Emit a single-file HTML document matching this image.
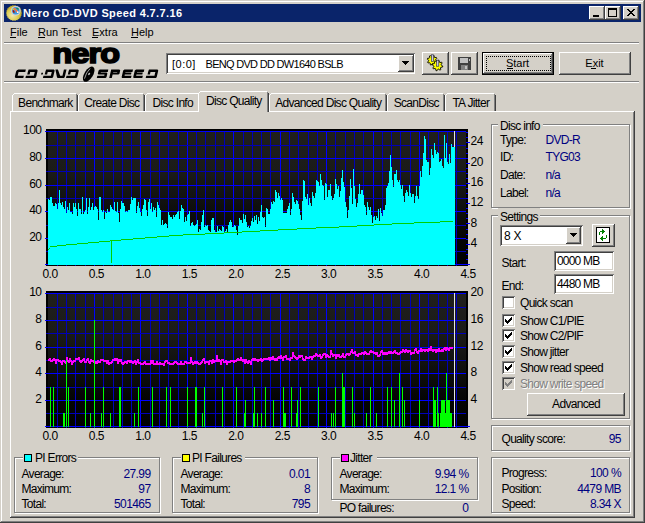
<!DOCTYPE html><html><head><meta charset="utf-8"><style>
html,body{margin:0;padding:0;width:645px;height:523px;overflow:hidden;background:#d4d0c8}
body{position:relative;font-family:"Liberation Sans",sans-serif}
div{position:absolute;box-sizing:border-box}
.t{white-space:pre;line-height:13px;font-size:11px}
</style></head><body>
<div style="left:0px;top:0px;width:645px;height:1px;background:#d4d0c8"></div>
<div style="left:0px;top:0px;width:1px;height:523px;background:#d4d0c8"></div>
<div style="left:1px;top:1px;width:643px;height:1px;background:#fff"></div>
<div style="left:1px;top:1px;width:1px;height:521px;background:#fff"></div>
<div style="left:644px;top:0px;width:1px;height:523px;background:#404040"></div>
<div style="left:0px;top:522px;width:645px;height:1px;background:#404040"></div>
<div style="left:643px;top:1px;width:1px;height:521px;background:#808080"></div>
<div style="left:1px;top:521px;width:643px;height:1px;background:#808080"></div>
<div style="left:4px;top:4px;width:637px;height:18px;background:#0a246a"></div>
<svg style="position:absolute;left:4px;top:4px" width="20" height="18" viewBox="4 4 20 18">
<defs><radialGradient id="gold" cx="0.4" cy="0.65" r="0.6"><stop offset="0" stop-color="#f0e8b0"/><stop offset="0.6" stop-color="#dccc50"/><stop offset="1" stop-color="#c0a820"/></radialGradient></defs>
<polygon points="22.10,13.00 21.23,14.04 21.77,15.28 20.64,16.03 20.81,17.38 19.52,17.78 19.30,19.12 17.95,19.14 17.36,20.37 16.06,20.00 15.15,21.02 14.00,20.30 12.85,21.02 11.94,20.00 10.64,20.37 10.05,19.14 8.70,19.12 8.48,17.78 7.19,17.38 7.36,16.03 6.23,15.28 6.77,14.04 5.90,13.00 6.77,11.96 6.23,10.72 7.36,9.97 7.19,8.62 8.48,8.22 8.70,6.88 10.05,6.86 10.64,5.63 11.94,6.00 12.85,4.98 14.00,5.70 15.15,4.98 16.06,6.00 17.36,5.63 17.95,6.86 19.30,6.88 19.52,8.22 20.81,8.62 20.64,9.97 21.77,10.72 21.23,11.96" fill="url(#gold)"/>
<circle cx="15.8" cy="10.8" r="4.9" fill="#d0d0d8"/>
<circle cx="15.8" cy="10.8" r="3.7" fill="#3898e0"/>
<path d="M14 8 L17.8 12.3" stroke="#ff7040" stroke-width="1.6"/>
<path d="M13 10.3 L14.3 12.6" stroke="#b01000" stroke-width="1.5"/>
<path d="M16.5 8.3 L18.6 9.2" stroke="#209020" stroke-width="1.2"/>
<circle cx="13.3" cy="9.3" r="0.7" fill="#f0e000"/>
<circle cx="17.8" cy="12.2" r="0.9" fill="#fff"/>
</svg>
<div class="t" style="left:23px;top:7px;color:#fff;font-size:11px;font-weight:700;letter-spacing:0.37px;">Nero CD-DVD Speed 4.7.7.16</div>
<div style="left:589px;top:6px;width:16px;height:14px;background:#d4d0c8;box-shadow:inset -1px -1px #404040,inset 1px 1px #fff,inset -2px -2px #808080,inset 2px 2px #d4d0c8"></div>
<div style="left:605px;top:6px;width:16px;height:14px;background:#d4d0c8;box-shadow:inset -1px -1px #404040,inset 1px 1px #fff,inset -2px -2px #808080,inset 2px 2px #d4d0c8"></div>
<div style="left:623px;top:6px;width:16px;height:14px;background:#d4d0c8;box-shadow:inset -1px -1px #404040,inset 1px 1px #fff,inset -2px -2px #808080,inset 2px 2px #d4d0c8"></div>
<div style="left:593px;top:15px;width:6px;height:2px;background:#000"></div>
<div style="left:608px;top:8px;width:9px;height:9px;border:1px solid #000;border-top-width:2px;box-sizing:border-box"></div>
<svg style="position:absolute;left:627px;top:9px" width="8" height="7" shape-rendering="crispEdges"><path d="M0 0h2v1h-2zM6 0h2v1h-2zM1 1h2v1h-2zM5 1h2v1h-2zM2 2h4v1h-4zM3 3h2v1h-2zM2 4h4v1h-4zM1 5h2v1h-2zM5 5h2v1h-2zM0 6h2v1h-2zM6 6h2v1h-2z" fill="#000"/></svg>
<div class="t" style="left:10px;top:26px;color:#000;font-size:11px;font-weight:400;letter-spacing:0px;">File</div>
<div style="left:10px;top:37px;width:6px;height:1px;background:#000"></div>
<div class="t" style="left:38px;top:26px;color:#000;font-size:11px;font-weight:400;letter-spacing:0px;">Run Test</div>
<div style="left:38px;top:37px;width:7px;height:1px;background:#000"></div>
<div class="t" style="left:92px;top:26px;color:#000;font-size:11px;font-weight:400;letter-spacing:0px;">Extra</div>
<div style="left:92px;top:37px;width:6px;height:1px;background:#000"></div>
<div class="t" style="left:131px;top:26px;color:#000;font-size:11px;font-weight:400;letter-spacing:0px;">Help</div>
<div style="left:131px;top:37px;width:7px;height:1px;background:#000"></div>
<div style="left:4px;top:42px;width:635px;height:1px;background:#808080"></div>
<div style="left:4px;top:43px;width:635px;height:1px;background:#fff"></div>
<div style="left:4px;top:81px;width:635px;height:1px;background:#808080"></div>
<div style="left:4px;top:82px;width:635px;height:1px;background:#fff"></div>
<svg style="position:absolute;left:0;top:0" width="170" height="85" viewBox="0 0 170 85"><text x="52.6" y="63.2" font-family="Liberation Sans" font-weight="700" font-size="28.5" letter-spacing="-0.8" fill="#000" stroke="#000" stroke-width="1.7" textLength="66.5" lengthAdjust="spacingAndGlyphs">nero</text><g transform="translate(0,78) skewX(-13.5) translate(0,-78)"><path fill="#000" d="M16.30 69.60L23.80 69.60L23.80 71.90L17.10 71.90L17.10 75.70L23.30 75.70L23.30 78.00L16.00 78.00L14.80 77.40L14.50 76.40L14.50 71.40L15.00 70.20ZM26.60 69.60L34.90 69.60L35.90 70.60L35.90 77.20L35.10 78.00L25.40 78.00L25.40 75.70L33.30 75.70L33.30 71.90L26.60 71.90ZM26.40 70.60H28.80V74.60H26.40ZM40.20 72.80H41.90V74.60H40.20ZM44.10 69.60L51.90 69.60L52.90 70.60L52.90 77.20L52.10 78.00L42.90 78.00L42.90 75.70L50.30 75.70L50.30 71.90L44.10 71.90ZM43.90 70.60H46.30V74.60H43.90ZM53.40 69.60L55.90 69.60L59.60 75.70L61.90 75.70L61.90 69.60L64.50 69.60L64.50 77.20L63.70 78.00L57.60 78.00L56.80 77.20ZM67.20 69.60L76.00 69.60L77.00 70.60L77.00 77.20L76.20 78.00L66.00 78.00L66.00 75.70L74.40 75.70L74.40 71.90L67.20 71.90ZM67.00 70.60H69.40V74.60H67.00ZM97.80 69.60L106.30 69.60L106.30 71.90L99.40 71.90L99.40 72.60L105.30 72.60L106.30 73.60L106.30 77.20L105.50 78.00L96.80 78.00L96.80 75.70L103.70 75.70L103.70 74.60L97.60 74.60L96.80 73.80L96.80 70.60ZM109.20 69.60H111.80V78.00H109.20ZM109.20 69.60H117.40V71.90H109.20ZM115.80 70.20H118.40V74.00H115.80ZM109.20 72.60H117.60V74.60H109.20ZM117.40 69.60L118.40 70.60L117.40 70.60ZM118.40 73.80L117.60 74.60L117.60 73.80ZM122.40 69.60L131.00 69.60L131.00 71.90L124.00 71.90L124.00 72.60L130.20 72.60L130.20 74.60L124.00 74.60L124.00 75.70L131.00 75.70L131.00 78.00L122.20 78.00L121.40 77.20L121.40 70.60ZM134.00 69.60L142.30 69.60L142.30 71.90L135.60 71.90L135.60 72.60L141.50 72.60L141.50 74.60L135.60 74.60L135.60 75.70L142.30 75.70L142.30 78.00L133.80 78.00L133.00 77.20L133.00 70.60ZM146.90 69.60L155.50 69.60L156.50 70.60L156.50 77.20L155.70 78.00L145.70 78.00L145.70 75.70L153.90 75.70L153.90 71.90L146.90 71.90ZM146.70 70.60H149.10V74.60H146.70Z"/></g><g transform="translate(88.7,74.2) rotate(-58)"><ellipse cx="0" cy="0" rx="8.6" ry="4.3" fill="#000"/><path d="M-6 -1.2 Q0 -3.2 5.5 -1.8" fill="none" stroke="#b0b0b0" stroke-width="0.8"/><ellipse cx="0.5" cy="0.2" rx="1.3" ry="0.9" fill="#c8c8c8"/></g></svg>
<div style="left:166px;top:53px;width:249px;height:21px;background:#fff;box-shadow:inset 1px 1px #808080,inset -1px -1px #fff,inset 2px 2px #404040,inset -2px -2px #d4d0c8"></div>
<div style="left:398px;top:55px;width:16px;height:17px;background:#d4d0c8;box-shadow:inset -1px -1px #404040,inset 1px 1px #fff,inset -2px -2px #808080,inset 2px 2px #d4d0c8"></div>
<svg style="position:absolute;left:402px;top:61px" width="7" height="4" shape-rendering="crispEdges"><path d="M0 0h7v1h-1v1h-1v1h-1v1h-1v-1h-1v-1h-1v-1h-1z" fill="#000"/></svg>
<div class="t" style="left:172px;top:58px;color:#000;font-size:11px;font-weight:400;letter-spacing:0.5px;">[0:0]</div>
<div class="t" style="left:205.5px;top:58px;color:#000;font-size:11px;font-weight:400;letter-spacing:-0.7px;">BENQ DVD DD DW1640 BSLB</div>
<div style="left:422px;top:52px;width:27px;height:23px;background:#d4d0c8;box-shadow:inset -1px -1px #404040,inset 1px 1px #fff,inset -2px -2px #808080,inset 2px 2px #d4d0c8"></div>
<div style="left:451px;top:52px;width:27px;height:23px;background:#d4d0c8;box-shadow:inset -1px -1px #404040,inset 1px 1px #fff,inset -2px -2px #808080,inset 2px 2px #d4d0c8"></div>
<svg style="position:absolute;left:424px;top:52px" width="22" height="22" viewBox="0 0 22 22">
<polygon points="13.10,9.19 12.81,10.13 11.19,10.21 10.74,10.75 10.96,12.37 10.10,12.83 8.89,11.73 8.19,11.80 7.21,13.10 6.27,12.81 6.19,11.19 5.65,10.74 4.03,10.96 3.57,10.10 4.67,8.89 4.60,8.19 3.30,7.21 3.59,6.27 5.21,6.19 5.66,5.65 5.44,4.03 6.30,3.57 7.51,4.67 8.21,4.60 9.19,3.30 10.13,3.59 10.21,5.21 10.75,5.66 12.37,5.44 12.83,6.30 11.73,7.51 11.80,8.21" fill="#ffff00" stroke="#000" stroke-width="0.9"/>
<polygon points="18.77,14.03 18.57,15.05 16.85,15.30 16.43,15.92 16.85,17.60 15.99,18.18 14.60,17.14 13.87,17.28 12.97,18.77 11.95,18.57 11.70,16.85 11.08,16.43 9.40,16.85 8.82,15.99 9.86,14.60 9.72,13.87 8.23,12.97 8.43,11.95 10.15,11.70 10.57,11.08 10.15,9.40 11.01,8.82 12.40,9.86 13.13,9.72 14.03,8.23 15.05,8.43 15.30,10.15 15.92,10.57 17.60,10.15 18.18,11.01 17.14,12.40 17.28,13.13" fill="#ffff00" stroke="#000" stroke-width="0.9"/>
<rect x="7.3" y="2.8" width="2.2" height="6.5" fill="#c8c8e8" stroke="#202030" stroke-width="0.6"/>
<rect x="12.6" y="8.2" width="2.2" height="6" fill="#c8c8e8" stroke="#202030" stroke-width="0.6"/>
</svg>
<svg style="position:absolute;left:458px;top:57px" width="14" height="13" viewBox="0 0 14 13" shape-rendering="crispEdges">
<rect x="0" y="0" width="13" height="13" fill="#404040"/>
<rect x="2" y="1" width="8" height="5" fill="#c0c0c0"/>
<rect x="3" y="8" width="7" height="5" fill="#808080"/>
<rect x="7" y="9" width="2" height="3" fill="#c0c0c0"/>
<rect x="11" y="2" width="1" height="2" fill="#c0c0c0"/>
</svg>
<div style="left:482px;top:52px;width:72px;height:23px;border:1px solid #000;box-sizing:border-box"></div>
<div style="left:483px;top:53px;width:70px;height:21px;background:#d4d0c8;box-shadow:inset -1px -1px #404040,inset 1px 1px #fff,inset -2px -2px #808080,inset 2px 2px #d4d0c8"></div>
<div style="left:486px;top:56px;width:65px;height:15px;border:1px dotted #000;box-sizing:border-box"></div>
<div class="t" style="left:367.5px;width:300px;text-align:center;top:57px;color:#000;font-size:11px;font-weight:400;letter-spacing:0px;">Start</div>
<div style="left:507px;top:68px;width:6px;height:1px;background:#000"></div>
<div style="left:559px;top:52px;width:72px;height:23px;background:#d4d0c8;box-shadow:inset -1px -1px #404040,inset 1px 1px #fff,inset -2px -2px #808080,inset 2px 2px #d4d0c8"></div>
<div class="t" style="left:444.5px;width:300px;text-align:center;top:57px;color:#000;font-size:11px;font-weight:400;letter-spacing:0px;">Exit</div>
<div style="left:591px;top:68px;width:5px;height:1px;background:#000"></div>
<div style="left:10px;top:111px;width:625px;height:407px;background:#d4d0c8"></div>
<div style="left:10px;top:111px;width:624px;height:1px;background:#fff"></div>
<div style="left:10px;top:111px;width:1px;height:406px;background:#fff"></div>
<div style="left:633px;top:112px;width:1px;height:405px;background:#808080"></div>
<div style="left:634px;top:111px;width:1px;height:407px;background:#404040"></div>
<div style="left:11px;top:516px;width:623px;height:1px;background:#808080"></div>
<div style="left:10px;top:517px;width:625px;height:1px;background:#404040"></div>
<div style="left:12px;top:93px;width:66px;height:18px;background:#d4d0c8"></div>
<div style="left:12px;top:95px;width:1px;height:16px;background:#fff"></div>
<div style="left:13px;top:94px;width:1px;height:1px;background:#fff"></div>
<div style="left:14px;top:93px;width:62px;height:1px;background:#fff"></div>
<div style="left:76px;top:94px;width:1px;height:17px;background:#808080"></div>
<div style="left:77px;top:95px;width:1px;height:16px;background:#404040"></div>
<div class="t" style="left:-104.7px;width:300px;text-align:center;top:97px;color:#000;font-size:12px;font-weight:400;letter-spacing:-0.7px;">Benchmark</div>
<div style="left:78px;top:93px;width:67px;height:18px;background:#d4d0c8"></div>
<div style="left:78px;top:95px;width:1px;height:16px;background:#fff"></div>
<div style="left:79px;top:94px;width:1px;height:1px;background:#fff"></div>
<div style="left:80px;top:93px;width:63px;height:1px;background:#fff"></div>
<div style="left:143px;top:94px;width:1px;height:17px;background:#808080"></div>
<div style="left:144px;top:95px;width:1px;height:16px;background:#404040"></div>
<div class="t" style="left:-38.2px;width:300px;text-align:center;top:97px;color:#000;font-size:12px;font-weight:400;letter-spacing:-0.7px;">Create Disc</div>
<div style="left:145px;top:93px;width:55px;height:18px;background:#d4d0c8"></div>
<div style="left:145px;top:95px;width:1px;height:16px;background:#fff"></div>
<div style="left:146px;top:94px;width:1px;height:1px;background:#fff"></div>
<div style="left:147px;top:93px;width:51px;height:1px;background:#fff"></div>
<div style="left:198px;top:94px;width:1px;height:17px;background:#808080"></div>
<div style="left:199px;top:95px;width:1px;height:16px;background:#404040"></div>
<div class="t" style="left:22.80000000000001px;width:300px;text-align:center;top:97px;color:#000;font-size:12px;font-weight:400;letter-spacing:-0.7px;">Disc Info</div>
<div style="left:269px;top:93px;width:118px;height:18px;background:#d4d0c8"></div>
<div style="left:269px;top:95px;width:1px;height:16px;background:#fff"></div>
<div style="left:270px;top:94px;width:1px;height:1px;background:#fff"></div>
<div style="left:271px;top:93px;width:114px;height:1px;background:#fff"></div>
<div style="left:385px;top:94px;width:1px;height:17px;background:#808080"></div>
<div style="left:386px;top:95px;width:1px;height:16px;background:#404040"></div>
<div class="t" style="left:178.3px;width:300px;text-align:center;top:97px;color:#000;font-size:12px;font-weight:400;letter-spacing:-0.7px;">Advanced Disc Quality</div>
<div style="left:387px;top:93px;width:58px;height:18px;background:#d4d0c8"></div>
<div style="left:387px;top:95px;width:1px;height:16px;background:#fff"></div>
<div style="left:388px;top:94px;width:1px;height:1px;background:#fff"></div>
<div style="left:389px;top:93px;width:54px;height:1px;background:#fff"></div>
<div style="left:443px;top:94px;width:1px;height:17px;background:#808080"></div>
<div style="left:444px;top:95px;width:1px;height:16px;background:#404040"></div>
<div class="t" style="left:266.3px;width:300px;text-align:center;top:97px;color:#000;font-size:12px;font-weight:400;letter-spacing:-0.7px;">ScanDisc</div>
<div style="left:445px;top:93px;width:51px;height:18px;background:#d4d0c8"></div>
<div style="left:445px;top:95px;width:1px;height:16px;background:#fff"></div>
<div style="left:446px;top:94px;width:1px;height:1px;background:#fff"></div>
<div style="left:447px;top:93px;width:47px;height:1px;background:#fff"></div>
<div style="left:494px;top:94px;width:1px;height:17px;background:#808080"></div>
<div style="left:495px;top:95px;width:1px;height:16px;background:#404040"></div>
<div class="t" style="left:320.8px;width:300px;text-align:center;top:97px;color:#000;font-size:12px;font-weight:400;letter-spacing:-0.7px;">TA Jitter</div>
<div style="left:198px;top:91px;width:71px;height:21px;background:#d4d0c8"></div>
<div style="left:198px;top:93px;width:1px;height:19px;background:#fff"></div>
<div style="left:199px;top:92px;width:1px;height:1px;background:#fff"></div>
<div style="left:200px;top:91px;width:67px;height:1px;background:#fff"></div>
<div style="left:267px;top:92px;width:1px;height:20px;background:#808080"></div>
<div style="left:268px;top:93px;width:1px;height:19px;background:#404040"></div>
<div style="left:199px;top:111px;width:68px;height:1px;background:#d4d0c8"></div>
<div class="t" style="left:83.80000000000001px;width:300px;text-align:center;top:95px;color:#000;font-size:12px;font-weight:400;letter-spacing:-0.7px;">Disc Quality</div>
<svg style="position:absolute;left:0;top:0" width="645" height="523" shape-rendering="crispEdges"><defs><linearGradient id="ga" x1="0" y1="0" x2="0" y2="1"><stop offset="0" stop-color="#201f1d"/><stop offset="0.3" stop-color="#1b1b19"/><stop offset="0.8" stop-color="#040404"/><stop offset="1" stop-color="#000"/></linearGradient><linearGradient id="gb" x1="0" y1="0" x2="0" y2="1"><stop offset="0" stop-color="#201f1d"/><stop offset="0.3" stop-color="#1b1b19"/><stop offset="0.8" stop-color="#040404"/><stop offset="1" stop-color="#000"/></linearGradient></defs><rect x="46" y="129" width="422" height="137" fill="#000"/><rect x="48" y="131" width="418" height="134" fill="url(#ga)"/><rect x="57" y="131" width="1" height="135" fill="#0000b8"/><rect x="66" y="131" width="1" height="135" fill="#0000b8"/><rect x="75" y="131" width="1" height="135" fill="#0000b8"/><rect x="85" y="131" width="1" height="135" fill="#0000b8"/><rect x="94" y="131" width="1" height="135" fill="#0000ff"/><rect x="103" y="131" width="1" height="135" fill="#0000b8"/><rect x="113" y="131" width="1" height="135" fill="#0000b8"/><rect x="122" y="131" width="1" height="135" fill="#0000b8"/><rect x="131" y="131" width="1" height="135" fill="#0000b8"/><rect x="140" y="131" width="1" height="135" fill="#0000ff"/><rect x="150" y="131" width="1" height="135" fill="#0000b8"/><rect x="159" y="131" width="1" height="135" fill="#0000b8"/><rect x="168" y="131" width="1" height="135" fill="#0000b8"/><rect x="178" y="131" width="1" height="135" fill="#0000b8"/><rect x="187" y="131" width="1" height="135" fill="#0000ff"/><rect x="196" y="131" width="1" height="135" fill="#0000b8"/><rect x="205" y="131" width="1" height="135" fill="#0000b8"/><rect x="215" y="131" width="1" height="135" fill="#0000b8"/><rect x="224" y="131" width="1" height="135" fill="#0000b8"/><rect x="233" y="131" width="1" height="135" fill="#0000ff"/><rect x="243" y="131" width="1" height="135" fill="#0000b8"/><rect x="252" y="131" width="1" height="135" fill="#0000b8"/><rect x="261" y="131" width="1" height="135" fill="#0000b8"/><rect x="270" y="131" width="1" height="135" fill="#0000b8"/><rect x="280" y="131" width="1" height="135" fill="#0000ff"/><rect x="289" y="131" width="1" height="135" fill="#0000b8"/><rect x="298" y="131" width="1" height="135" fill="#0000b8"/><rect x="308" y="131" width="1" height="135" fill="#0000b8"/><rect x="317" y="131" width="1" height="135" fill="#0000b8"/><rect x="326" y="131" width="1" height="135" fill="#0000ff"/><rect x="335" y="131" width="1" height="135" fill="#0000b8"/><rect x="345" y="131" width="1" height="135" fill="#0000b8"/><rect x="354" y="131" width="1" height="135" fill="#0000b8"/><rect x="363" y="131" width="1" height="135" fill="#0000b8"/><rect x="373" y="131" width="1" height="135" fill="#0000ff"/><rect x="382" y="131" width="1" height="135" fill="#0000b8"/><rect x="391" y="131" width="1" height="135" fill="#0000b8"/><rect x="400" y="131" width="1" height="135" fill="#0000b8"/><rect x="410" y="131" width="1" height="135" fill="#0000b8"/><rect x="419" y="131" width="1" height="135" fill="#0000ff"/><rect x="428" y="131" width="1" height="135" fill="#0000b8"/><rect x="438" y="131" width="1" height="135" fill="#0000b8"/><rect x="447" y="131" width="1" height="135" fill="#0000b8"/><rect x="456" y="131" width="1" height="135" fill="#0000b8"/><rect x="45" y="131" width="421" height="1" fill="#0000ff"/><rect x="46" y="145" width="420" height="1" fill="#0000b8"/><rect x="45" y="158" width="421" height="1" fill="#0000ff"/><rect x="46" y="171" width="420" height="1" fill="#0000b8"/><rect x="45" y="185" width="421" height="1" fill="#0000ff"/><rect x="46" y="198" width="420" height="1" fill="#0000b8"/><rect x="45" y="211" width="421" height="1" fill="#0000ff"/><rect x="46" y="225" width="420" height="1" fill="#0000b8"/><rect x="45" y="238" width="421" height="1" fill="#0000ff"/><rect x="46" y="251" width="420" height="1" fill="#0000b8"/><rect x="45" y="264" width="421" height="1" fill="#0000ff"/><rect x="45" y="264" width="425" height="1" fill="#0000ff"/><rect x="466" y="264" width="4" height="1" fill="#0000ff"/><rect x="466" y="259" width="2" height="1" fill="#0000ff"/><rect x="466" y="254" width="2" height="1" fill="#0000ff"/><rect x="466" y="249" width="2" height="1" fill="#0000ff"/><rect x="466" y="244" width="4" height="1" fill="#0000ff"/><rect x="466" y="239" width="2" height="1" fill="#0000ff"/><rect x="466" y="234" width="2" height="1" fill="#0000ff"/><rect x="466" y="229" width="2" height="1" fill="#0000ff"/><rect x="466" y="223" width="4" height="1" fill="#0000ff"/><rect x="466" y="218" width="2" height="1" fill="#0000ff"/><rect x="466" y="213" width="2" height="1" fill="#0000ff"/><rect x="466" y="208" width="2" height="1" fill="#0000ff"/><rect x="466" y="203" width="4" height="1" fill="#0000ff"/><rect x="466" y="198" width="2" height="1" fill="#0000ff"/><rect x="466" y="193" width="2" height="1" fill="#0000ff"/><rect x="466" y="188" width="2" height="1" fill="#0000ff"/><rect x="466" y="183" width="4" height="1" fill="#0000ff"/><rect x="466" y="178" width="2" height="1" fill="#0000ff"/><rect x="466" y="173" width="2" height="1" fill="#0000ff"/><rect x="466" y="168" width="2" height="1" fill="#0000ff"/><rect x="466" y="163" width="4" height="1" fill="#0000ff"/><rect x="466" y="158" width="2" height="1" fill="#0000ff"/><rect x="466" y="153" width="2" height="1" fill="#0000ff"/><rect x="466" y="148" width="2" height="1" fill="#0000ff"/><rect x="466" y="142" width="4" height="1" fill="#0000ff"/><rect x="466" y="137" width="2" height="1" fill="#0000ff"/><rect x="466" y="132" width="2" height="1" fill="#0000ff"/><rect x="454" y="131" width="1" height="134" fill="#e4e4e4"/><path fill="#00ffff" d="M48 199h1V265h-1zM49 200h1V265h-1zM50 197h1V265h-1zM51 197h1V265h-1zM52 203h1V265h-1zM53 206h1V265h-1zM54 206h1V265h-1zM55 203h1V265h-1zM56 204h1V265h-1zM57 209h1V265h-1zM58 203h1V265h-1zM59 190h1V265h-1zM60 203h1V265h-1zM61 205h1V265h-1zM62 202h1V265h-1zM63 207h1V265h-1zM64 209h1V265h-1zM65 201h1V265h-1zM66 213h1V265h-1zM67 207h1V265h-1zM68 210h1V265h-1zM69 203h1V265h-1zM70 212h1V265h-1zM71 212h1V265h-1zM72 214h1V265h-1zM73 203h1V265h-1zM74 207h1V265h-1zM75 203h1V265h-1zM76 209h1V265h-1zM77 216h1V265h-1zM78 203h1V265h-1zM79 209h1V265h-1zM80 209h1V265h-1zM81 214h1V265h-1zM82 197h1V265h-1zM83 214h1V265h-1zM84 212h1V265h-1zM85 210h1V265h-1zM86 198h1V265h-1zM87 214h1V265h-1zM88 207h1V265h-1zM89 198h1V265h-1zM90 210h1V265h-1zM91 207h1V265h-1zM92 203h1V265h-1zM93 210h1V265h-1zM94 207h1V265h-1zM95 206h1V265h-1zM96 207h1V265h-1zM97 209h1V265h-1zM98 220h1V265h-1zM99 197h1V265h-1zM100 197h1V265h-1zM101 210h1V265h-1zM102 212h1V265h-1zM103 210h1V265h-1zM104 219h1V265h-1zM105 212h1V265h-1zM106 213h1V265h-1zM107 209h1V265h-1zM108 212h1V265h-1zM109 212h1V265h-1zM110 205h1V265h-1zM111 207h1V265h-1zM112 209h1V265h-1zM113 210h1V265h-1zM114 202h1V265h-1zM115 211h1V265h-1zM116 212h1V265h-1zM117 202h1V265h-1zM118 213h1V265h-1zM119 222h1V265h-1zM120 209h1V265h-1zM121 201h1V265h-1zM122 203h1V265h-1zM123 203h1V265h-1zM124 206h1V265h-1zM125 212h1V265h-1zM126 211h1V265h-1zM127 212h1V265h-1zM128 210h1V265h-1zM129 210h1V265h-1zM130 204h1V265h-1zM131 197h1V265h-1zM132 200h1V265h-1zM133 198h1V265h-1zM134 198h1V265h-1zM135 198h1V265h-1zM136 213h1V265h-1zM137 206h1V265h-1zM138 202h1V265h-1zM139 208h1V265h-1zM140 212h1V265h-1zM141 216h1V265h-1zM142 209h1V265h-1zM143 205h1V265h-1zM144 199h1V265h-1zM145 200h1V265h-1zM146 210h1V265h-1zM147 216h1V265h-1zM148 202h1V265h-1zM149 199h1V265h-1zM150 209h1V265h-1zM151 203h1V265h-1zM152 212h1V265h-1zM153 207h1V265h-1zM154 210h1V265h-1zM155 208h1V265h-1zM156 217h1V265h-1zM157 202h1V265h-1zM158 205h1V265h-1zM159 208h1V265h-1zM160 210h1V265h-1zM161 225h1V265h-1zM162 220h1V265h-1zM163 225h1V265h-1zM164 224h1V265h-1zM165 223h1V265h-1zM166 224h1V265h-1zM167 228h1V265h-1zM168 212h1V265h-1zM169 215h1V265h-1zM170 217h1V265h-1zM171 217h1V265h-1zM172 219h1V265h-1zM173 215h1V265h-1zM174 217h1V265h-1zM175 215h1V265h-1zM176 214h1V265h-1zM177 212h1V265h-1zM178 211h1V265h-1zM179 219h1V265h-1zM180 211h1V265h-1zM181 205h1V265h-1zM182 208h1V265h-1zM183 209h1V265h-1zM184 222h1V265h-1zM185 217h1V265h-1zM186 221h1V265h-1zM187 215h1V265h-1zM188 214h1V265h-1zM189 211h1V265h-1zM190 226h1V265h-1zM191 223h1V265h-1zM192 222h1V265h-1zM193 225h1V265h-1zM194 226h1V265h-1zM195 225h1V265h-1zM196 224h1V265h-1zM197 220h1V265h-1zM198 232h1V265h-1zM199 229h1V265h-1zM200 230h1V265h-1zM201 222h1V265h-1zM202 215h1V265h-1zM203 210h1V265h-1zM204 227h1V265h-1zM205 225h1V265h-1zM206 226h1V265h-1zM207 225h1V265h-1zM208 230h1V265h-1zM209 231h1V265h-1zM210 232h1V265h-1zM211 220h1V265h-1zM212 218h1V265h-1zM213 218h1V265h-1zM214 230h1V265h-1zM215 232h1V265h-1zM216 232h1V265h-1zM217 226h1V265h-1zM218 231h1V265h-1zM219 229h1V265h-1zM220 230h1V265h-1zM221 231h1V265h-1zM222 226h1V265h-1zM223 227h1V265h-1zM224 233h1V265h-1zM225 231h1V265h-1zM226 229h1V265h-1zM227 233h1V265h-1zM228 225h1V265h-1zM229 222h1V265h-1zM230 220h1V265h-1zM231 222h1V265h-1zM232 227h1V265h-1zM233 227h1V265h-1zM234 225h1V265h-1zM235 226h1V265h-1zM236 230h1V265h-1zM237 235h1V265h-1zM238 226h1V265h-1zM239 218h1V265h-1zM240 220h1V265h-1zM241 220h1V265h-1zM242 223h1V265h-1zM243 214h1V265h-1zM244 219h1V265h-1zM245 215h1V265h-1zM246 222h1V265h-1zM247 227h1V265h-1zM248 226h1V265h-1zM249 228h1V265h-1zM250 226h1V265h-1zM251 221h1V265h-1zM252 218h1V265h-1zM253 222h1V265h-1zM254 216h1V265h-1zM255 220h1V265h-1zM256 215h1V265h-1zM257 224h1V265h-1zM258 217h1V265h-1zM259 221h1V265h-1zM260 212h1V265h-1zM261 205h1V265h-1zM262 217h1V265h-1zM263 218h1V265h-1zM264 217h1V265h-1zM265 227h1V265h-1zM266 208h1V265h-1zM267 209h1V265h-1zM268 214h1V265h-1zM269 214h1V265h-1zM270 209h1V265h-1zM271 202h1V265h-1zM272 204h1V265h-1zM273 201h1V265h-1zM274 202h1V265h-1zM275 190h1V265h-1zM276 192h1V265h-1zM277 198h1V265h-1zM278 193h1V265h-1zM279 196h1V265h-1zM280 200h1V265h-1zM281 198h1V265h-1zM282 200h1V265h-1zM283 213h1V265h-1zM284 213h1V265h-1zM285 213h1V265h-1zM286 213h1V265h-1zM287 209h1V265h-1zM288 206h1V265h-1zM289 203h1V265h-1zM290 215h1V265h-1zM291 209h1V265h-1zM292 193h1V265h-1zM293 197h1V265h-1zM294 202h1V265h-1zM295 204h1V265h-1zM296 200h1V265h-1zM297 201h1V265h-1zM298 204h1V265h-1zM299 209h1V265h-1zM300 215h1V265h-1zM301 220h1V265h-1zM302 201h1V265h-1zM303 180h1V265h-1zM304 181h1V265h-1zM305 197h1V265h-1zM306 199h1V265h-1zM307 194h1V265h-1zM308 205h1V265h-1zM309 198h1V265h-1zM310 203h1V265h-1zM311 206h1V265h-1zM312 192h1V265h-1zM313 196h1V265h-1zM314 198h1V265h-1zM315 193h1V265h-1zM316 180h1V265h-1zM317 181h1V265h-1zM318 182h1V265h-1zM319 186h1V265h-1zM320 174h1V265h-1zM321 180h1V265h-1zM322 185h1V265h-1zM323 186h1V265h-1zM324 200h1V265h-1zM325 183h1V265h-1zM326 184h1V265h-1zM327 197h1V265h-1zM328 190h1V265h-1zM329 190h1V265h-1zM330 184h1V265h-1zM331 196h1V265h-1zM332 200h1V265h-1zM333 198h1V265h-1zM334 194h1V265h-1zM335 179h1V265h-1zM336 184h1V265h-1zM337 189h1V265h-1zM338 186h1V265h-1zM339 197h1V265h-1zM340 191h1V265h-1zM341 178h1V265h-1zM342 170h1V265h-1zM343 182h1V265h-1zM344 187h1V265h-1zM345 202h1V265h-1zM346 207h1V265h-1zM347 218h1V265h-1zM348 210h1V265h-1zM349 196h1V265h-1zM350 179h1V265h-1zM351 188h1V265h-1zM352 204h1V265h-1zM353 169h1V265h-1zM354 186h1V265h-1zM355 199h1V265h-1zM356 207h1V265h-1zM357 203h1V265h-1zM358 194h1V265h-1zM359 184h1V265h-1zM360 194h1V265h-1zM361 190h1V265h-1zM362 190h1V265h-1zM363 195h1V265h-1zM364 205h1V265h-1zM365 207h1V265h-1zM366 215h1V265h-1zM367 202h1V265h-1zM368 207h1V265h-1zM369 210h1V265h-1zM370 207h1V265h-1zM371 215h1V265h-1zM372 223h1V265h-1zM373 217h1V265h-1zM374 216h1V265h-1zM375 220h1V265h-1zM376 216h1V265h-1zM377 218h1V265h-1zM378 209h1V265h-1zM379 221h1V265h-1zM380 208h1V265h-1zM381 213h1V265h-1zM382 216h1V265h-1zM383 210h1V265h-1zM384 210h1V265h-1zM385 205h1V265h-1zM386 188h1V265h-1zM387 186h1V265h-1zM388 183h1V265h-1zM389 171h1V265h-1zM390 155h1V265h-1zM391 167h1V265h-1zM392 180h1V265h-1zM393 187h1V265h-1zM394 174h1V265h-1zM395 174h1V265h-1zM396 170h1V265h-1zM397 180h1V265h-1zM398 182h1V265h-1zM399 180h1V265h-1zM400 185h1V265h-1zM401 189h1V265h-1zM402 185h1V265h-1zM403 196h1V265h-1zM404 202h1V265h-1zM405 193h1V265h-1zM406 190h1V265h-1zM407 192h1V265h-1zM408 196h1V265h-1zM409 185h1V265h-1zM410 193h1V265h-1zM411 197h1V265h-1zM412 194h1V265h-1zM413 194h1V265h-1zM414 203h1V265h-1zM415 196h1V265h-1zM416 186h1V265h-1zM417 196h1V265h-1zM418 199h1V265h-1zM419 186h1V265h-1zM420 171h1V265h-1zM421 177h1V265h-1zM422 166h1V265h-1zM423 153h1V265h-1zM424 136h1V265h-1zM425 139h1V265h-1zM426 160h1V265h-1zM427 162h1V265h-1zM428 162h1V265h-1zM429 175h1V265h-1zM430 168h1V265h-1zM431 149h1V265h-1zM432 155h1V265h-1zM433 158h1V265h-1zM434 143h1V265h-1zM435 150h1V265h-1zM436 154h1V265h-1zM437 152h1V265h-1zM438 153h1V265h-1zM439 162h1V265h-1zM440 161h1V265h-1zM441 159h1V265h-1zM442 166h1V265h-1zM443 168h1V265h-1zM444 135h1V265h-1zM445 158h1V265h-1zM446 143h1V265h-1zM447 162h1V265h-1zM448 164h1V265h-1zM449 154h1V265h-1zM450 163h1V265h-1zM451 144h1V265h-1zM452 147h1V265h-1zM453 147h1V265h-1zM454 147h1V265h-1z"/><path fill="#00d000" d="M48 249h1v1h-1zM49 248h1v1h-1zM50 246h1v1h-1zM51 246h1v1h-1zM52 246h1v1h-1zM53 246h1v1h-1zM54 246h1v1h-1zM55 246h1v1h-1zM56 246h1v1h-1zM57 245h1v1h-1zM58 245h1v1h-1zM59 245h1v1h-1zM60 245h1v1h-1zM61 245h1v1h-1zM62 245h1v1h-1zM63 245h1v1h-1zM64 245h1v1h-1zM65 245h1v1h-1zM66 244h1v1h-1zM67 244h1v1h-1zM68 244h1v1h-1zM69 244h1v1h-1zM70 244h1v1h-1zM71 244h1v1h-1zM72 244h1v1h-1zM73 244h1v1h-1zM74 244h1v1h-1zM75 244h1v1h-1zM76 244h1v1h-1zM77 243h1v1h-1zM78 243h1v1h-1zM79 243h1v1h-1zM80 243h1v1h-1zM81 243h1v1h-1zM82 243h1v1h-1zM83 243h1v1h-1zM84 243h1v1h-1zM85 243h1v1h-1zM86 243h1v1h-1zM87 243h1v1h-1zM88 242h1v1h-1zM89 242h1v1h-1zM90 242h1v1h-1zM91 242h1v1h-1zM92 242h1v1h-1zM93 242h1v1h-1zM94 242h1v1h-1zM95 242h1v1h-1zM96 242h1v1h-1zM97 242h1v1h-1zM98 242h1v1h-1zM99 241h1v1h-1zM100 241h1v1h-1zM101 241h1v1h-1zM102 241h1v1h-1zM103 241h1v1h-1zM104 241h1v1h-1zM105 241h1v1h-1zM106 241h1v1h-1zM107 241h1v1h-1zM108 241h1v1h-1zM109 241h1v1h-1zM110 240h1v1h-1zM111 240h1v1h-1zM112 240h1v1h-1zM113 240h1v1h-1zM114 240h1v1h-1zM115 240h1v1h-1zM116 240h1v1h-1zM117 240h1v1h-1zM118 240h1v1h-1zM119 240h1v1h-1zM120 240h1v1h-1zM121 239h1v1h-1zM122 239h1v1h-1zM123 239h1v1h-1zM124 239h1v1h-1zM125 239h1v1h-1zM126 239h1v1h-1zM127 239h1v1h-1zM128 239h1v1h-1zM129 239h1v1h-1zM130 239h1v1h-1zM131 239h1v1h-1zM132 239h1v1h-1zM133 238h1v1h-1zM134 238h1v1h-1zM135 238h1v1h-1zM136 238h1v1h-1zM137 238h1v1h-1zM138 238h1v1h-1zM139 238h1v1h-1zM140 238h1v1h-1zM141 238h1v1h-1zM142 238h1v1h-1zM143 238h1v1h-1zM144 238h1v1h-1zM145 237h1v1h-1zM146 237h1v1h-1zM147 237h1v1h-1zM148 237h1v1h-1zM149 237h1v1h-1zM150 237h1v1h-1zM151 237h1v1h-1zM152 237h1v1h-1zM153 237h1v1h-1zM154 237h1v1h-1zM155 237h1v1h-1zM156 237h1v1h-1zM157 236h1v1h-1zM158 236h1v1h-1zM159 236h1v1h-1zM160 236h1v1h-1zM161 236h1v1h-1zM162 236h1v1h-1zM163 236h1v1h-1zM164 236h1v1h-1zM165 236h1v1h-1zM166 236h1v1h-1zM167 236h1v1h-1zM168 236h1v1h-1zM169 235h1v1h-1zM170 235h1v1h-1zM171 235h1v1h-1zM172 235h1v1h-1zM173 235h1v1h-1zM174 235h1v1h-1zM175 235h1v1h-1zM176 235h1v1h-1zM177 235h1v1h-1zM178 235h1v1h-1zM179 235h1v1h-1zM180 235h1v1h-1zM181 235h1v1h-1zM182 235h1v1h-1zM183 234h1v1h-1zM184 234h1v1h-1zM185 234h1v1h-1zM186 234h1v1h-1zM187 234h1v1h-1zM188 234h1v1h-1zM189 234h1v1h-1zM190 234h1v1h-1zM191 234h1v1h-1zM192 234h1v1h-1zM193 234h1v1h-1zM194 234h1v1h-1zM195 234h1v1h-1zM196 234h1v1h-1zM197 234h1v1h-1zM198 234h1v1h-1zM199 234h1v1h-1zM200 234h1v1h-1zM201 234h1v1h-1zM202 234h1v1h-1zM203 234h1v1h-1zM204 234h1v1h-1zM205 233h1v1h-1zM206 233h1v1h-1zM207 233h1v1h-1zM208 233h1v1h-1zM209 233h1v1h-1zM210 233h1v1h-1zM211 233h1v1h-1zM212 233h1v1h-1zM213 233h1v1h-1zM214 233h1v1h-1zM215 233h1v1h-1zM216 233h1v1h-1zM217 233h1v1h-1zM218 233h1v1h-1zM219 233h1v1h-1zM220 233h1v1h-1zM221 233h1v1h-1zM222 233h1v1h-1zM223 233h1v1h-1zM224 232h1v1h-1zM225 232h1v1h-1zM226 232h1v1h-1zM227 232h1v1h-1zM228 232h1v1h-1zM229 232h1v1h-1zM230 232h1v1h-1zM231 232h1v1h-1zM232 232h1v1h-1zM233 232h1v1h-1zM234 232h1v1h-1zM235 232h1v1h-1zM236 232h1v1h-1zM237 232h1v1h-1zM238 232h1v1h-1zM239 232h1v1h-1zM240 232h1v1h-1zM241 232h1v1h-1zM242 231h1v1h-1zM243 231h1v1h-1zM244 231h1v1h-1zM245 231h1v1h-1zM246 231h1v1h-1zM247 231h1v1h-1zM248 231h1v1h-1zM249 231h1v1h-1zM250 231h1v1h-1zM251 231h1v1h-1zM252 231h1v1h-1zM253 231h1v1h-1zM254 231h1v1h-1zM255 231h1v1h-1zM256 231h1v1h-1zM257 231h1v1h-1zM258 231h1v1h-1zM259 231h1v1h-1zM260 230h1v1h-1zM261 230h1v1h-1zM262 230h1v1h-1zM263 230h1v1h-1zM264 230h1v1h-1zM265 230h1v1h-1zM266 230h1v1h-1zM267 230h1v1h-1zM268 230h1v1h-1zM269 230h1v1h-1zM270 230h1v1h-1zM271 230h1v1h-1zM272 230h1v1h-1zM273 230h1v1h-1zM274 230h1v1h-1zM275 230h1v1h-1zM276 230h1v1h-1zM277 230h1v1h-1zM278 229h1v1h-1zM279 229h1v1h-1zM280 229h1v1h-1zM281 229h1v1h-1zM282 229h1v1h-1zM283 229h1v1h-1zM284 229h1v1h-1zM285 229h1v1h-1zM286 229h1v1h-1zM287 229h1v1h-1zM288 229h1v1h-1zM289 229h1v1h-1zM290 229h1v1h-1zM291 229h1v1h-1zM292 229h1v1h-1zM293 229h1v1h-1zM294 229h1v1h-1zM295 229h1v1h-1zM296 229h1v1h-1zM297 228h1v1h-1zM298 228h1v1h-1zM299 228h1v1h-1zM300 228h1v1h-1zM301 228h1v1h-1zM302 228h1v1h-1zM303 228h1v1h-1zM304 228h1v1h-1zM305 228h1v1h-1zM306 228h1v1h-1zM307 228h1v1h-1zM308 228h1v1h-1zM309 228h1v1h-1zM310 228h1v1h-1zM311 228h1v1h-1zM312 228h1v1h-1zM313 228h1v1h-1zM314 228h1v1h-1zM315 228h1v1h-1zM316 227h1v1h-1zM317 227h1v1h-1zM318 227h1v1h-1zM319 227h1v1h-1zM320 227h1v1h-1zM321 227h1v1h-1zM322 227h1v1h-1zM323 227h1v1h-1zM324 227h1v1h-1zM325 227h1v1h-1zM326 227h1v1h-1zM327 227h1v1h-1zM328 227h1v1h-1zM329 227h1v1h-1zM330 227h1v1h-1zM331 227h1v1h-1zM332 227h1v1h-1zM333 227h1v1h-1zM334 227h1v1h-1zM335 227h1v1h-1zM336 227h1v1h-1zM337 227h1v1h-1zM338 227h1v1h-1zM339 226h1v1h-1zM340 226h1v1h-1zM341 226h1v1h-1zM342 226h1v1h-1zM343 226h1v1h-1zM344 226h1v1h-1zM345 226h1v1h-1zM346 226h1v1h-1zM347 226h1v1h-1zM348 226h1v1h-1zM349 226h1v1h-1zM350 226h1v1h-1zM351 226h1v1h-1zM352 226h1v1h-1zM353 226h1v1h-1zM354 226h1v1h-1zM355 226h1v1h-1zM356 226h1v1h-1zM357 225h1v1h-1zM358 225h1v1h-1zM359 225h1v1h-1zM360 225h1v1h-1zM361 225h1v1h-1zM362 225h1v1h-1zM363 225h1v1h-1zM364 225h1v1h-1zM365 225h1v1h-1zM366 225h1v1h-1zM367 225h1v1h-1zM368 225h1v1h-1zM369 225h1v1h-1zM370 225h1v1h-1zM371 225h1v1h-1zM372 225h1v1h-1zM373 225h1v1h-1zM374 224h1v1h-1zM375 224h1v1h-1zM376 224h1v1h-1zM377 224h1v1h-1zM378 224h1v1h-1zM379 224h1v1h-1zM380 224h1v1h-1zM381 224h1v1h-1zM382 224h1v1h-1zM383 224h1v1h-1zM384 224h1v1h-1zM385 224h1v1h-1zM386 224h1v1h-1zM387 224h1v1h-1zM388 224h1v1h-1zM389 224h1v1h-1zM390 224h1v1h-1zM391 224h1v1h-1zM392 223h1v1h-1zM393 223h1v1h-1zM394 223h1v1h-1zM395 223h1v1h-1zM396 223h1v1h-1zM397 223h1v1h-1zM398 223h1v1h-1zM399 223h1v1h-1zM400 223h1v1h-1zM401 223h1v1h-1zM402 223h1v1h-1zM403 223h1v1h-1zM404 223h1v1h-1zM405 223h1v1h-1zM406 223h1v1h-1zM407 223h1v1h-1zM408 223h1v1h-1zM409 223h1v1h-1zM410 223h1v1h-1zM411 223h1v1h-1zM412 223h1v1h-1zM413 223h1v1h-1zM414 222h1v1h-1zM415 222h1v1h-1zM416 222h1v1h-1zM417 222h1v1h-1zM418 222h1v1h-1zM419 222h1v1h-1zM420 222h1v1h-1zM421 222h1v1h-1zM422 222h1v1h-1zM423 222h1v1h-1zM424 222h1v1h-1zM425 222h1v1h-1zM426 222h1v1h-1zM427 222h1v1h-1zM428 222h1v1h-1zM429 222h1v1h-1zM430 222h1v1h-1zM431 222h1v1h-1zM432 222h1v1h-1zM433 222h1v1h-1zM434 222h1v1h-1zM435 222h1v1h-1zM436 222h1v1h-1zM437 222h1v1h-1zM438 222h1v1h-1zM439 222h1v1h-1zM440 221h1v1h-1zM441 221h1v1h-1zM442 221h1v1h-1zM443 221h1v1h-1zM444 221h1v1h-1zM445 221h1v1h-1zM446 221h1v1h-1zM447 221h1v1h-1zM448 221h1v1h-1zM449 221h1v1h-1zM450 221h1v1h-1zM451 221h1v1h-1zM452 221h1v1h-1zM111 240h1V263h-1z"/><rect x="46" y="291" width="422" height="137" fill="#000"/><rect x="48" y="293" width="418" height="134" fill="url(#gb)"/><rect x="57" y="293" width="1" height="135" fill="#0000b8"/><rect x="66" y="293" width="1" height="135" fill="#0000b8"/><rect x="75" y="293" width="1" height="135" fill="#0000b8"/><rect x="85" y="293" width="1" height="135" fill="#0000b8"/><rect x="94" y="293" width="1" height="135" fill="#0000ff"/><rect x="103" y="293" width="1" height="135" fill="#0000b8"/><rect x="113" y="293" width="1" height="135" fill="#0000b8"/><rect x="122" y="293" width="1" height="135" fill="#0000b8"/><rect x="131" y="293" width="1" height="135" fill="#0000b8"/><rect x="140" y="293" width="1" height="135" fill="#0000ff"/><rect x="150" y="293" width="1" height="135" fill="#0000b8"/><rect x="159" y="293" width="1" height="135" fill="#0000b8"/><rect x="168" y="293" width="1" height="135" fill="#0000b8"/><rect x="178" y="293" width="1" height="135" fill="#0000b8"/><rect x="187" y="293" width="1" height="135" fill="#0000ff"/><rect x="196" y="293" width="1" height="135" fill="#0000b8"/><rect x="205" y="293" width="1" height="135" fill="#0000b8"/><rect x="215" y="293" width="1" height="135" fill="#0000b8"/><rect x="224" y="293" width="1" height="135" fill="#0000b8"/><rect x="233" y="293" width="1" height="135" fill="#0000ff"/><rect x="243" y="293" width="1" height="135" fill="#0000b8"/><rect x="252" y="293" width="1" height="135" fill="#0000b8"/><rect x="261" y="293" width="1" height="135" fill="#0000b8"/><rect x="270" y="293" width="1" height="135" fill="#0000b8"/><rect x="280" y="293" width="1" height="135" fill="#0000ff"/><rect x="289" y="293" width="1" height="135" fill="#0000b8"/><rect x="298" y="293" width="1" height="135" fill="#0000b8"/><rect x="308" y="293" width="1" height="135" fill="#0000b8"/><rect x="317" y="293" width="1" height="135" fill="#0000b8"/><rect x="326" y="293" width="1" height="135" fill="#0000ff"/><rect x="335" y="293" width="1" height="135" fill="#0000b8"/><rect x="345" y="293" width="1" height="135" fill="#0000b8"/><rect x="354" y="293" width="1" height="135" fill="#0000b8"/><rect x="363" y="293" width="1" height="135" fill="#0000b8"/><rect x="373" y="293" width="1" height="135" fill="#0000ff"/><rect x="382" y="293" width="1" height="135" fill="#0000b8"/><rect x="391" y="293" width="1" height="135" fill="#0000b8"/><rect x="400" y="293" width="1" height="135" fill="#0000b8"/><rect x="410" y="293" width="1" height="135" fill="#0000b8"/><rect x="419" y="293" width="1" height="135" fill="#0000ff"/><rect x="428" y="293" width="1" height="135" fill="#0000b8"/><rect x="438" y="293" width="1" height="135" fill="#0000b8"/><rect x="447" y="293" width="1" height="135" fill="#0000b8"/><rect x="456" y="293" width="1" height="135" fill="#0000b8"/><rect x="45" y="293" width="421" height="1" fill="#0000ff"/><rect x="46" y="307" width="420" height="1" fill="#0000b8"/><rect x="45" y="320" width="421" height="1" fill="#0000ff"/><rect x="46" y="333" width="420" height="1" fill="#0000b8"/><rect x="45" y="347" width="421" height="1" fill="#0000ff"/><rect x="46" y="360" width="420" height="1" fill="#0000b8"/><rect x="45" y="373" width="421" height="1" fill="#0000ff"/><rect x="46" y="387" width="420" height="1" fill="#0000b8"/><rect x="45" y="400" width="421" height="1" fill="#0000ff"/><rect x="46" y="413" width="420" height="1" fill="#0000b8"/><rect x="45" y="426" width="421" height="1" fill="#0000ff"/><rect x="45" y="426" width="425" height="1" fill="#0000ff"/><rect x="454" y="293" width="1" height="134" fill="#e4e4e4"/><path fill="#ff00ff" d="M48 359h1V361h-1zM49 358h1V361h-1zM50 358h1V362h-1zM51 360h1V362h-1zM52 359h1V362h-1zM53 358h1V361h-1zM54 358h1V361h-1zM55 359h1V364h-1zM56 359h1V364h-1zM57 359h1V361h-1zM58 359h1V362h-1zM59 360h1V362h-1zM60 360h1V363h-1zM61 361h1V365h-1zM62 360h1V365h-1zM63 360h1V362h-1zM64 360h1V363h-1zM65 361h1V364h-1zM66 357h1V364h-1zM67 357h1V362h-1zM68 360h1V363h-1zM69 358h1V363h-1zM70 358h1V362h-1zM71 360h1V365h-1zM72 361h1V365h-1zM73 360h1V363h-1zM74 360h1V362h-1zM75 358h1V362h-1zM76 358h1V360h-1zM77 358h1V360h-1zM78 357h1V360h-1zM79 357h1V362h-1zM80 360h1V363h-1zM81 360h1V363h-1zM82 359h1V362h-1zM83 358h1V361h-1zM84 358h1V363h-1zM85 361h1V363h-1zM86 359h1V363h-1zM87 358h1V361h-1zM88 358h1V363h-1zM89 361h1V364h-1zM90 359h1V364h-1zM91 359h1V362h-1zM92 360h1V362h-1zM93 360h1V363h-1zM94 361h1V364h-1zM95 361h1V364h-1zM96 361h1V364h-1zM97 360h1V364h-1zM98 360h1V363h-1zM99 361h1V363h-1zM100 359h1V363h-1zM101 359h1V361h-1zM102 359h1V361h-1zM103 359h1V362h-1zM104 360h1V362h-1zM105 360h1V362h-1zM106 360h1V364h-1zM107 360h1V364h-1zM108 360h1V365h-1zM109 362h1V365h-1zM110 362h1V364h-1zM111 361h1V364h-1zM112 359h1V363h-1zM113 359h1V361h-1zM114 358h1V361h-1zM115 358h1V361h-1zM116 358h1V361h-1zM117 358h1V364h-1zM118 359h1V364h-1zM119 359h1V362h-1zM120 359h1V362h-1zM121 359h1V364h-1zM122 362h1V365h-1zM123 362h1V365h-1zM124 361h1V364h-1zM125 361h1V363h-1zM126 361h1V364h-1zM127 360h1V364h-1zM128 360h1V362h-1zM129 360h1V363h-1zM130 360h1V363h-1zM131 360h1V363h-1zM132 361h1V364h-1zM133 361h1V364h-1zM134 360h1V363h-1zM135 360h1V365h-1zM136 361h1V365h-1zM137 359h1V363h-1zM138 359h1V364h-1zM139 362h1V364h-1zM140 362h1V365h-1zM141 363h1V365h-1zM142 363h1V365h-1zM143 362h1V365h-1zM144 361h1V364h-1zM145 361h1V365h-1zM146 363h1V365h-1zM147 363h1V365h-1zM148 363h1V365h-1zM149 363h1V365h-1zM150 360h1V365h-1zM151 360h1V364h-1zM152 360h1V364h-1zM153 360h1V365h-1zM154 363h1V365h-1zM155 363h1V365h-1zM156 361h1V365h-1zM157 361h1V365h-1zM158 363h1V365h-1zM159 362h1V365h-1zM160 362h1V365h-1zM161 363h1V365h-1zM162 363h1V365h-1zM163 363h1V366h-1zM164 361h1V366h-1zM165 360h1V363h-1zM166 360h1V362h-1zM167 360h1V364h-1zM168 362h1V364h-1zM169 362h1V365h-1zM170 363h1V365h-1zM171 363h1V365h-1zM172 363h1V365h-1zM173 362h1V365h-1zM174 361h1V364h-1zM175 361h1V363h-1zM176 361h1V364h-1zM177 362h1V365h-1zM178 363h1V365h-1zM179 363h1V365h-1zM180 361h1V365h-1zM181 361h1V365h-1zM182 363h1V365h-1zM183 363h1V365h-1zM184 361h1V365h-1zM185 361h1V363h-1zM186 361h1V364h-1zM187 362h1V364h-1zM188 362h1V364h-1zM189 362h1V364h-1zM190 357h1V364h-1zM191 357h1V363h-1zM192 361h1V365h-1zM193 362h1V365h-1zM194 361h1V364h-1zM195 361h1V364h-1zM196 361h1V364h-1zM197 361h1V364h-1zM198 362h1V365h-1zM199 363h1V365h-1zM200 362h1V365h-1zM201 361h1V364h-1zM202 359h1V363h-1zM203 358h1V361h-1zM204 358h1V364h-1zM205 361h1V364h-1zM206 361h1V363h-1zM207 361h1V363h-1zM208 361h1V365h-1zM209 360h1V365h-1zM210 360h1V362h-1zM211 360h1V364h-1zM212 359h1V364h-1zM213 359h1V363h-1zM214 360h1V363h-1zM215 360h1V362h-1zM216 355h1V362h-1zM217 355h1V362h-1zM218 359h1V362h-1zM219 359h1V362h-1zM220 360h1V365h-1zM221 359h1V365h-1zM222 359h1V361h-1zM223 359h1V363h-1zM224 361h1V363h-1zM225 360h1V363h-1zM226 360h1V365h-1zM227 361h1V365h-1zM228 361h1V363h-1zM229 361h1V363h-1zM230 360h1V363h-1zM231 360h1V362h-1zM232 360h1V362h-1zM233 360h1V363h-1zM234 360h1V363h-1zM235 360h1V362h-1zM236 359h1V362h-1zM237 358h1V361h-1zM238 358h1V361h-1zM239 359h1V361h-1zM240 357h1V361h-1zM241 357h1V361h-1zM242 359h1V362h-1zM243 359h1V362h-1zM244 359h1V364h-1zM245 359h1V364h-1zM246 359h1V363h-1zM247 361h1V364h-1zM248 360h1V364h-1zM249 360h1V363h-1zM250 361h1V365h-1zM251 359h1V365h-1zM252 358h1V361h-1zM253 358h1V361h-1zM254 358h1V361h-1zM255 358h1V361h-1zM256 359h1V361h-1zM257 359h1V362h-1zM258 359h1V362h-1zM259 359h1V361h-1zM260 358h1V361h-1zM261 358h1V362h-1zM262 359h1V362h-1zM263 358h1V361h-1zM264 358h1V360h-1zM265 358h1V360h-1zM266 358h1V360h-1zM267 358h1V360h-1zM268 357h1V360h-1zM269 357h1V361h-1zM270 357h1V361h-1zM271 357h1V360h-1zM272 356h1V360h-1zM273 356h1V360h-1zM274 358h1V361h-1zM275 358h1V361h-1zM276 358h1V361h-1zM277 357h1V361h-1zM278 356h1V359h-1zM279 356h1V359h-1zM280 355h1V359h-1zM281 355h1V359h-1zM282 357h1V361h-1zM283 356h1V361h-1zM284 356h1V358h-1zM285 355h1V358h-1zM286 355h1V360h-1zM287 358h1V360h-1zM288 358h1V360h-1zM289 358h1V361h-1zM290 357h1V361h-1zM291 357h1V359h-1zM292 352h1V359h-1zM293 352h1V357h-1zM294 355h1V358h-1zM295 356h1V359h-1zM296 357h1V360h-1zM297 357h1V360h-1zM298 355h1V359h-1zM299 355h1V358h-1zM300 355h1V358h-1zM301 355h1V357h-1zM302 355h1V360h-1zM303 358h1V361h-1zM304 359h1V361h-1zM305 356h1V361h-1zM306 356h1V359h-1zM307 357h1V359h-1zM308 357h1V359h-1zM309 356h1V359h-1zM310 356h1V358h-1zM311 356h1V360h-1zM312 356h1V360h-1zM313 355h1V358h-1zM314 355h1V357h-1zM315 353h1V357h-1zM316 353h1V356h-1zM317 354h1V357h-1zM318 355h1V357h-1zM319 354h1V357h-1zM320 354h1V359h-1zM321 356h1V359h-1zM322 354h1V358h-1zM323 353h1V356h-1zM324 353h1V355h-1zM325 353h1V358h-1zM326 354h1V358h-1zM327 354h1V357h-1zM328 355h1V358h-1zM329 356h1V358h-1zM330 350h1V358h-1zM331 350h1V355h-1zM332 353h1V357h-1zM333 354h1V357h-1zM334 354h1V356h-1zM335 354h1V359h-1zM336 354h1V359h-1zM337 354h1V357h-1zM338 354h1V357h-1zM339 354h1V358h-1zM340 356h1V358h-1zM341 355h1V358h-1zM342 353h1V357h-1zM343 353h1V358h-1zM344 356h1V358h-1zM345 354h1V358h-1zM346 353h1V356h-1zM347 353h1V355h-1zM348 353h1V356h-1zM349 353h1V356h-1zM350 351h1V355h-1zM351 349h1V353h-1zM352 349h1V354h-1zM353 352h1V354h-1zM354 351h1V354h-1zM355 351h1V356h-1zM356 354h1V356h-1zM357 354h1V357h-1zM358 353h1V357h-1zM359 353h1V355h-1zM360 353h1V355h-1zM361 352h1V355h-1zM362 352h1V354h-1zM363 352h1V355h-1zM364 351h1V355h-1zM365 351h1V354h-1zM366 352h1V355h-1zM367 353h1V355h-1zM368 353h1V355h-1zM369 351h1V355h-1zM370 350h1V353h-1zM371 350h1V353h-1zM372 351h1V353h-1zM373 351h1V354h-1zM374 352h1V354h-1zM375 352h1V355h-1zM376 352h1V355h-1zM377 352h1V357h-1zM378 355h1V357h-1zM379 354h1V357h-1zM380 351h1V356h-1zM381 350h1V353h-1zM382 350h1V355h-1zM383 352h1V355h-1zM384 352h1V355h-1zM385 352h1V355h-1zM386 352h1V355h-1zM387 352h1V355h-1zM388 351h1V354h-1zM389 351h1V354h-1zM390 351h1V354h-1zM391 351h1V354h-1zM392 352h1V354h-1zM393 351h1V354h-1zM394 350h1V353h-1zM395 350h1V354h-1zM396 352h1V354h-1zM397 352h1V355h-1zM398 353h1V355h-1zM399 352h1V355h-1zM400 351h1V354h-1zM401 351h1V353h-1zM402 349h1V353h-1zM403 349h1V352h-1zM404 350h1V353h-1zM405 349h1V353h-1zM406 349h1V352h-1zM407 350h1V353h-1zM408 350h1V353h-1zM409 350h1V352h-1zM410 350h1V355h-1zM411 352h1V355h-1zM412 352h1V354h-1zM413 352h1V354h-1zM414 349h1V354h-1zM415 348h1V351h-1zM416 348h1V353h-1zM417 351h1V354h-1zM418 350h1V354h-1zM419 350h1V352h-1zM420 348h1V352h-1zM421 348h1V352h-1zM422 349h1V352h-1zM423 349h1V351h-1zM424 349h1V352h-1zM425 349h1V352h-1zM426 349h1V351h-1zM427 349h1V352h-1zM428 348h1V352h-1zM429 348h1V351h-1zM430 346h1V351h-1zM431 346h1V351h-1zM432 349h1V352h-1zM433 349h1V352h-1zM434 349h1V351h-1zM435 349h1V353h-1zM436 349h1V353h-1zM437 349h1V352h-1zM438 348h1V352h-1zM439 348h1V352h-1zM440 350h1V352h-1zM441 349h1V352h-1zM442 349h1V352h-1zM443 348h1V352h-1zM444 347h1V350h-1zM445 347h1V351h-1zM446 347h1V351h-1zM447 347h1V350h-1zM448 348h1V351h-1zM449 347h1V351h-1zM450 347h1V349h-1zM451 347h1V349h-1zM452 347h1V349h-1z"/><path fill="#00ff00" d="M50 387h1V427h-1zM53 387h1V427h-1zM63 413h2V427h-2zM66 360h1V427h-1zM68 387h1V427h-1zM85 387h1V427h-1zM90 413h1V427h-1zM94 320h1V427h-1zM101 413h1V427h-1zM103 387h1V427h-1zM110 413h1V427h-1zM119 387h2V427h-2zM134 413h1V427h-1zM138 387h1V427h-1zM152 387h1V427h-1zM166 387h1V427h-1zM170 387h1V427h-1zM187 387h1V427h-1zM195 387h2V427h-2zM202 413h1V427h-1zM204 387h1V427h-1zM222 387h1V427h-1zM236 387h1V427h-1zM244 413h2V427h-2zM245 400h1V427h-1zM253 413h2V427h-2zM254 387h1V427h-1zM257 413h1V427h-1zM261 413h1V427h-1zM265 387h1V427h-1zM273 400h1V427h-1zM283 387h1V427h-1zM284 413h2V427h-2zM291 387h1V427h-1zM296 413h2V427h-2zM297 400h1V427h-1zM300 387h1V427h-1zM318 387h1V427h-1zM331 413h1V427h-1zM333 413h1V427h-1zM335 387h1V427h-1zM342 373h1V427h-1zM343 387h2V427h-2zM344 400h1V427h-1zM352 387h1V427h-1zM354 413h1V427h-1zM366 413h1V427h-1zM370 387h1V427h-1zM376 413h1V427h-1zM387 387h1V427h-1zM391 387h1V427h-1zM394 400h1V427h-1zM399 373h1V427h-1zM402 387h1V427h-1zM404 400h1V427h-1zM419 400h1V427h-1zM433 387h1V427h-1zM434 400h2V427h-2zM437 387h1V427h-1zM438 413h1V427h-1zM440 413h12V427h-12zM441 400h4V427h-4zM446 400h4V427h-4zM446 373h1V427h-1z"/></svg>
<div class="t" style="left:-258.5px;width:300px;text-align:right;top:124px;color:#000;font-size:12px;font-weight:400;letter-spacing:-0.5px;">100</div>
<div class="t" style="left:-258.5px;width:300px;text-align:right;top:151px;color:#000;font-size:12px;font-weight:400;letter-spacing:-0.5px;">80</div>
<div class="t" style="left:-258.5px;width:300px;text-align:right;top:178px;color:#000;font-size:12px;font-weight:400;letter-spacing:-0.5px;">60</div>
<div class="t" style="left:-258.5px;width:300px;text-align:right;top:204px;color:#000;font-size:12px;font-weight:400;letter-spacing:-0.5px;">40</div>
<div class="t" style="left:-258.5px;width:300px;text-align:right;top:231px;color:#000;font-size:12px;font-weight:400;letter-spacing:-0.5px;">20</div>
<div class="t" style="left:-258.5px;width:300px;text-align:right;top:286px;color:#000;font-size:12px;font-weight:400;letter-spacing:-0.5px;">10</div>
<div class="t" style="left:-258.5px;width:300px;text-align:right;top:313px;color:#000;font-size:12px;font-weight:400;letter-spacing:-0.5px;">8</div>
<div class="t" style="left:-258.5px;width:300px;text-align:right;top:340px;color:#000;font-size:12px;font-weight:400;letter-spacing:-0.5px;">6</div>
<div class="t" style="left:-258.5px;width:300px;text-align:right;top:366px;color:#000;font-size:12px;font-weight:400;letter-spacing:-0.5px;">4</div>
<div class="t" style="left:-258.5px;width:300px;text-align:right;top:393px;color:#000;font-size:12px;font-weight:400;letter-spacing:-0.5px;">2</div>
<div class="t" style="left:-100.0px;width:300px;text-align:center;top:268px;color:#000;font-size:12px;font-weight:400;letter-spacing:-0.5px;">0.0</div>
<div class="t" style="left:-100.0px;width:300px;text-align:center;top:430px;color:#000;font-size:12px;font-weight:400;letter-spacing:-0.5px;">0.0</div>
<div class="t" style="left:-53.55555555555556px;width:300px;text-align:center;top:268px;color:#000;font-size:12px;font-weight:400;letter-spacing:-0.5px;">0.5</div>
<div class="t" style="left:-53.55555555555556px;width:300px;text-align:center;top:430px;color:#000;font-size:12px;font-weight:400;letter-spacing:-0.5px;">0.5</div>
<div class="t" style="left:-7.111111111111114px;width:300px;text-align:center;top:268px;color:#000;font-size:12px;font-weight:400;letter-spacing:-0.5px;">1.0</div>
<div class="t" style="left:-7.111111111111114px;width:300px;text-align:center;top:430px;color:#000;font-size:12px;font-weight:400;letter-spacing:-0.5px;">1.0</div>
<div class="t" style="left:39.33333333333334px;width:300px;text-align:center;top:268px;color:#000;font-size:12px;font-weight:400;letter-spacing:-0.5px;">1.5</div>
<div class="t" style="left:39.33333333333334px;width:300px;text-align:center;top:430px;color:#000;font-size:12px;font-weight:400;letter-spacing:-0.5px;">1.5</div>
<div class="t" style="left:85.77777777777777px;width:300px;text-align:center;top:268px;color:#000;font-size:12px;font-weight:400;letter-spacing:-0.5px;">2.0</div>
<div class="t" style="left:85.77777777777777px;width:300px;text-align:center;top:430px;color:#000;font-size:12px;font-weight:400;letter-spacing:-0.5px;">2.0</div>
<div class="t" style="left:132.22222222222223px;width:300px;text-align:center;top:268px;color:#000;font-size:12px;font-weight:400;letter-spacing:-0.5px;">2.5</div>
<div class="t" style="left:132.22222222222223px;width:300px;text-align:center;top:430px;color:#000;font-size:12px;font-weight:400;letter-spacing:-0.5px;">2.5</div>
<div class="t" style="left:178.66666666666669px;width:300px;text-align:center;top:268px;color:#000;font-size:12px;font-weight:400;letter-spacing:-0.5px;">3.0</div>
<div class="t" style="left:178.66666666666669px;width:300px;text-align:center;top:430px;color:#000;font-size:12px;font-weight:400;letter-spacing:-0.5px;">3.0</div>
<div class="t" style="left:225.1111111111111px;width:300px;text-align:center;top:268px;color:#000;font-size:12px;font-weight:400;letter-spacing:-0.5px;">3.5</div>
<div class="t" style="left:225.1111111111111px;width:300px;text-align:center;top:430px;color:#000;font-size:12px;font-weight:400;letter-spacing:-0.5px;">3.5</div>
<div class="t" style="left:271.55555555555554px;width:300px;text-align:center;top:268px;color:#000;font-size:12px;font-weight:400;letter-spacing:-0.5px;">4.0</div>
<div class="t" style="left:271.55555555555554px;width:300px;text-align:center;top:430px;color:#000;font-size:12px;font-weight:400;letter-spacing:-0.5px;">4.0</div>
<div class="t" style="left:318.0px;width:300px;text-align:center;top:268px;color:#000;font-size:12px;font-weight:400;letter-spacing:-0.5px;">4.5</div>
<div class="t" style="left:318.0px;width:300px;text-align:center;top:430px;color:#000;font-size:12px;font-weight:400;letter-spacing:-0.5px;">4.5</div>
<div class="t" style="left:470.5px;top:135px;color:#000;font-size:12px;font-weight:400;letter-spacing:-0.5px;">24</div>
<div class="t" style="left:470.5px;top:156px;color:#000;font-size:12px;font-weight:400;letter-spacing:-0.5px;">20</div>
<div class="t" style="left:470.5px;top:176px;color:#000;font-size:12px;font-weight:400;letter-spacing:-0.5px;">16</div>
<div class="t" style="left:470.5px;top:196px;color:#000;font-size:12px;font-weight:400;letter-spacing:-0.5px;">12</div>
<div class="t" style="left:470.5px;top:217px;color:#000;font-size:12px;font-weight:400;letter-spacing:-0.5px;">8</div>
<div class="t" style="left:470.5px;top:237px;color:#000;font-size:12px;font-weight:400;letter-spacing:-0.5px;">4</div>
<div class="t" style="left:470.5px;top:286px;color:#000;font-size:12px;font-weight:400;letter-spacing:-0.5px;">20</div>
<div class="t" style="left:470.5px;top:313px;color:#000;font-size:12px;font-weight:400;letter-spacing:-0.5px;">16</div>
<div class="t" style="left:470.5px;top:340px;color:#000;font-size:12px;font-weight:400;letter-spacing:-0.5px;">12</div>
<div class="t" style="left:470.5px;top:366px;color:#000;font-size:12px;font-weight:400;letter-spacing:-0.5px;">8</div>
<div class="t" style="left:470.5px;top:393px;color:#000;font-size:12px;font-weight:400;letter-spacing:-0.5px;">4</div>
<div style="left:492px;top:125px;width:139px;height:84px;border:1px solid #fff;box-sizing:border-box"></div>
<div style="left:491px;top:124px;width:139px;height:84px;border:1px solid #808080;box-sizing:border-box"></div>
<div style="left:498px;top:117px;width:45px;height:14px;background:#d4d0c8"></div>
<div class="t" style="left:500px;top:120px;color:#000;font-size:12px;font-weight:400;letter-spacing:-0.7px;">Disc info</div>
<div class="t" style="left:500px;top:134px;color:#000;font-size:12px;font-weight:400;letter-spacing:-0.7px;">Type:</div>
<div class="t" style="left:545.5px;top:134px;color:#000080;font-size:12px;font-weight:400;letter-spacing:-0.7px;">DVD-R</div>
<div class="t" style="left:500px;top:151px;color:#000;font-size:12px;font-weight:400;letter-spacing:-0.7px;">ID:</div>
<div class="t" style="left:545.5px;top:151px;color:#000080;font-size:12px;font-weight:400;letter-spacing:-0.7px;">TYG03</div>
<div class="t" style="left:500px;top:169px;color:#000;font-size:12px;font-weight:400;letter-spacing:-0.7px;">Date:</div>
<div class="t" style="left:545.5px;top:169px;color:#000080;font-size:12px;font-weight:400;letter-spacing:-0.7px;">n/a</div>
<div class="t" style="left:500px;top:187px;color:#000;font-size:12px;font-weight:400;letter-spacing:-0.7px;">Label:</div>
<div class="t" style="left:545.5px;top:187px;color:#000080;font-size:12px;font-weight:400;letter-spacing:-0.7px;">n/a</div>
<div style="left:492px;top:216px;width:139px;height:204px;border:1px solid #fff;box-sizing:border-box"></div>
<div style="left:491px;top:215px;width:139px;height:204px;border:1px solid #808080;box-sizing:border-box"></div>
<div style="left:498px;top:208px;width:42px;height:14px;background:#d4d0c8"></div>
<div class="t" style="left:500px;top:211px;color:#000;font-size:12px;font-weight:400;letter-spacing:-0.7px;">Settings</div>
<div style="left:500px;top:225px;width:83px;height:21px;background:#fff;box-shadow:inset 1px 1px #808080,inset -1px -1px #fff,inset 2px 2px #404040,inset -2px -2px #d4d0c8"></div>
<div style="left:566px;top:227px;width:15px;height:17px;background:#d4d0c8;box-shadow:inset -1px -1px #404040,inset 1px 1px #fff,inset -2px -2px #808080,inset 2px 2px #d4d0c8"></div>
<svg style="position:absolute;left:570px;top:233px" width="7" height="4" shape-rendering="crispEdges"><path d="M0 0h7v1h-1v1h-1v1h-1v1h-1v-1h-1v-1h-1v-1h-1z" fill="#000"/></svg>
<div class="t" style="left:504px;top:230px;color:#000;font-size:12px;font-weight:400;letter-spacing:-0.3px;">8&nbsp;X</div>
<div style="left:592px;top:224px;width:23px;height:23px;background:#d4d0c8;box-shadow:inset -1px -1px #404040,inset 1px 1px #fff,inset -2px -2px #808080,inset 2px 2px #d4d0c8"></div>
<div style="left:596px;top:227px;width:14px;height:16px;background:#fff;border:1px solid #000;box-sizing:border-box"></div>
<svg style="position:absolute;left:597px;top:228px" width="12" height="14" viewBox="0 0 12 14" shape-rendering="crispEdges">
<path fill="#008000" d="M2 4h1v3h-1zM3 3h3v1h-3zM5 1h1v5h-1zM6 2h1v3h-1zM7 3h1v1h-1zM9 7h1v3h-1zM6 10h3v1h-3zM5 8h1v5h-1zM4 9h1v3h-1zM3 10h1v1h-1z"/>
</svg>
<div class="t" style="left:501.5px;top:257px;color:#000;font-size:12px;font-weight:400;letter-spacing:-0.7px;">Start:</div>
<div style="left:554px;top:251px;width:60px;height:20px;background:#fff;box-shadow:inset 1px 1px #808080,inset -1px -1px #fff,inset 2px 2px #404040,inset -2px -2px #d4d0c8"></div>
<div class="t" style="left:557px;top:255px;color:#000;font-size:12px;font-weight:400;letter-spacing:-0.8px;">0000 MB</div>
<div class="t" style="left:501.5px;top:280px;color:#000;font-size:12px;font-weight:400;letter-spacing:-0.7px;">End:</div>
<div style="left:554px;top:274px;width:60px;height:20px;background:#fff;box-shadow:inset 1px 1px #808080,inset -1px -1px #fff,inset 2px 2px #404040,inset -2px -2px #d4d0c8"></div>
<div class="t" style="left:557px;top:278px;color:#000;font-size:12px;font-weight:400;letter-spacing:-0.8px;">4480 MB</div>
<div style="left:502px;top:296px;width:13px;height:13px;background:#fff;box-shadow:inset 1px 1px #808080,inset -1px -1px #fff,inset 2px 2px #404040,inset -2px -2px #d4d0c8"></div>
<div class="t" style="left:520px;top:297px;color:#000;font-size:12px;font-weight:400;letter-spacing:-0.7px;">Quick scan</div>
<div style="left:502px;top:314px;width:13px;height:13px;background:#fff;box-shadow:inset 1px 1px #808080,inset -1px -1px #fff,inset 2px 2px #404040,inset -2px -2px #d4d0c8"></div>
<svg style="position:absolute;left:505px;top:317px" width="7" height="7" shape-rendering="crispEdges"><path fill="#000" d="M6 0h1v3h-1zM5 1h1v3h-1zM4 2h1v3h-1zM3 3h1v3h-1zM2 4h1v3h-1zM1 3h1v3h-1zM0 2h1v3h-1z"/></svg>
<div class="t" style="left:520px;top:315px;color:#000;font-size:12px;font-weight:400;letter-spacing:-0.7px;">Show C1/PIE</div>
<div style="left:502px;top:329px;width:13px;height:13px;background:#fff;box-shadow:inset 1px 1px #808080,inset -1px -1px #fff,inset 2px 2px #404040,inset -2px -2px #d4d0c8"></div>
<svg style="position:absolute;left:505px;top:332px" width="7" height="7" shape-rendering="crispEdges"><path fill="#000" d="M6 0h1v3h-1zM5 1h1v3h-1zM4 2h1v3h-1zM3 3h1v3h-1zM2 4h1v3h-1zM1 3h1v3h-1zM0 2h1v3h-1z"/></svg>
<div class="t" style="left:520px;top:330px;color:#000;font-size:12px;font-weight:400;letter-spacing:-0.7px;">Show C2/PIF</div>
<div style="left:502px;top:345px;width:13px;height:13px;background:#fff;box-shadow:inset 1px 1px #808080,inset -1px -1px #fff,inset 2px 2px #404040,inset -2px -2px #d4d0c8"></div>
<svg style="position:absolute;left:505px;top:348px" width="7" height="7" shape-rendering="crispEdges"><path fill="#000" d="M6 0h1v3h-1zM5 1h1v3h-1zM4 2h1v3h-1zM3 3h1v3h-1zM2 4h1v3h-1zM1 3h1v3h-1zM0 2h1v3h-1z"/></svg>
<div class="t" style="left:520px;top:346px;color:#000;font-size:12px;font-weight:400;letter-spacing:-0.7px;">Show jitter</div>
<div style="left:502px;top:361px;width:13px;height:13px;background:#fff;box-shadow:inset 1px 1px #808080,inset -1px -1px #fff,inset 2px 2px #404040,inset -2px -2px #d4d0c8"></div>
<svg style="position:absolute;left:505px;top:364px" width="7" height="7" shape-rendering="crispEdges"><path fill="#000" d="M6 0h1v3h-1zM5 1h1v3h-1zM4 2h1v3h-1zM3 3h1v3h-1zM2 4h1v3h-1zM1 3h1v3h-1zM0 2h1v3h-1z"/></svg>
<div class="t" style="left:520px;top:362px;color:#000;font-size:12px;font-weight:400;letter-spacing:-0.7px;">Show read speed</div>
<div style="left:502px;top:377px;width:13px;height:13px;background:#d4d0c8;box-shadow:inset 1px 1px #808080,inset -1px -1px #fff,inset 2px 2px #404040,inset -2px -2px #d4d0c8"></div>
<svg style="position:absolute;left:505px;top:380px" width="7" height="7" shape-rendering="crispEdges"><path fill="#808080" d="M6 0h1v3h-1zM5 1h1v3h-1zM4 2h1v3h-1zM3 3h1v3h-1zM2 4h1v3h-1zM1 3h1v3h-1zM0 2h1v3h-1z"/></svg>
<div class="t" style="left:521px;top:379px;color:#fff;font-size:12px;font-weight:400;letter-spacing:-0.7px;">Show write speed</div>
<div class="t" style="left:520px;top:378px;color:#808080;font-size:12px;font-weight:400;letter-spacing:-0.7px;">Show write speed</div>
<div style="left:527px;top:393px;width:98px;height:23px;background:#d4d0c8;box-shadow:inset -1px -1px #404040,inset 1px 1px #fff,inset -2px -2px #808080,inset 2px 2px #d4d0c8"></div>
<div class="t" style="left:426px;width:300px;text-align:center;top:398px;color:#000;font-size:12px;font-weight:400;letter-spacing:-0.7px;">Advanced</div>
<div style="left:492px;top:426px;width:139px;height:26px;border:1px solid #fff;box-sizing:border-box"></div>
<div style="left:491px;top:425px;width:139px;height:26px;border:1px solid #808080;box-sizing:border-box"></div>
<div class="t" style="left:501.5px;top:433px;color:#000;font-size:12px;font-weight:400;letter-spacing:-0.7px;">Quality score:</div>
<div class="t" style="left:321px;width:300px;text-align:right;top:433px;color:#000080;font-size:12px;font-weight:400;letter-spacing:-0.5px;">95</div>
<div style="left:492px;top:458px;width:139px;height:56px;border:1px solid #fff;box-sizing:border-box"></div>
<div style="left:491px;top:457px;width:139px;height:56px;border:1px solid #808080;box-sizing:border-box"></div>
<div class="t" style="left:501.5px;top:467px;color:#000;font-size:12px;font-weight:400;letter-spacing:-0.7px;">Progress:</div>
<div class="t" style="left:321px;width:300px;text-align:right;top:467px;color:#000080;font-size:12px;font-weight:400;letter-spacing:-0.6px;">100&nbsp;%</div>
<div class="t" style="left:501.5px;top:483px;color:#000;font-size:12px;font-weight:400;letter-spacing:-0.7px;">Position:</div>
<div class="t" style="left:321px;width:300px;text-align:right;top:483px;color:#000080;font-size:12px;font-weight:400;letter-spacing:-0.6px;">4479 MB</div>
<div class="t" style="left:501.5px;top:498px;color:#000;font-size:12px;font-weight:400;letter-spacing:-0.7px;">Speed:</div>
<div class="t" style="left:321px;width:300px;text-align:right;top:498px;color:#000080;font-size:12px;font-weight:400;letter-spacing:-0.6px;">8.34&nbsp;X</div>
<div style="left:15px;top:458px;width:146px;height:56px;border:1px solid #fff;box-sizing:border-box"></div>
<div style="left:14px;top:457px;width:146px;height:56px;border:1px solid #808080;box-sizing:border-box"></div>
<div style="left:23px;top:451px;width:55px;height:14px;background:#d4d0c8"></div>
<div style="left:24px;top:454px;width:8px;height:8px;background:#00ffff;border:1px solid #000;box-sizing:border-box"></div>
<div class="t" style="left:35px;top:452px;color:#000;font-size:12px;font-weight:400;letter-spacing:-0.7px;">PI Errors</div>
<div style="left:173px;top:458px;width:146px;height:56px;border:1px solid #fff;box-sizing:border-box"></div>
<div style="left:172px;top:457px;width:146px;height:56px;border:1px solid #808080;box-sizing:border-box"></div>
<div style="left:181px;top:451px;width:64px;height:14px;background:#d4d0c8"></div>
<div style="left:182px;top:454px;width:8px;height:8px;background:#ffff00;border:1px solid #000;box-sizing:border-box"></div>
<div class="t" style="left:192px;top:452px;color:#000;font-size:12px;font-weight:400;letter-spacing:-0.7px;">PI Failures</div>
<div style="left:332px;top:458px;width:147px;height:43px;border:1px solid #fff;box-sizing:border-box"></div>
<div style="left:331px;top:457px;width:147px;height:43px;border:1px solid #808080;box-sizing:border-box"></div>
<div style="left:340px;top:451px;width:37px;height:14px;background:#d4d0c8"></div>
<div style="left:341px;top:454px;width:8px;height:8px;background:#ff00ff;border:1px solid #000;box-sizing:border-box"></div>
<div class="t" style="left:350px;top:452px;color:#000;font-size:12px;font-weight:400;letter-spacing:-0.7px;">Jitter</div>
<div class="t" style="left:21.5px;top:468px;color:#000;font-size:12px;font-weight:400;letter-spacing:-0.7px;">Average:</div>
<div class="t" style="left:-149.5px;width:300px;text-align:right;top:468px;color:#000080;font-size:12px;font-weight:400;letter-spacing:-0.6px;">27.99</div>
<div class="t" style="left:21.5px;top:483px;color:#000;font-size:12px;font-weight:400;letter-spacing:-0.7px;">Maximum:</div>
<div class="t" style="left:-149.5px;width:300px;text-align:right;top:483px;color:#000080;font-size:12px;font-weight:400;letter-spacing:-0.6px;">97</div>
<div class="t" style="left:21.5px;top:498px;color:#000;font-size:12px;font-weight:400;letter-spacing:-0.7px;">Total:</div>
<div class="t" style="left:-149.5px;width:300px;text-align:right;top:498px;color:#000080;font-size:12px;font-weight:400;letter-spacing:-0.6px;">501465</div>
<div class="t" style="left:180.5px;top:468px;color:#000;font-size:12px;font-weight:400;letter-spacing:-0.7px;">Average:</div>
<div class="t" style="left:10px;width:300px;text-align:right;top:468px;color:#000080;font-size:12px;font-weight:400;letter-spacing:-0.6px;">0.01</div>
<div class="t" style="left:180.5px;top:483px;color:#000;font-size:12px;font-weight:400;letter-spacing:-0.7px;">Maximum:</div>
<div class="t" style="left:10px;width:300px;text-align:right;top:483px;color:#000080;font-size:12px;font-weight:400;letter-spacing:-0.6px;">8</div>
<div class="t" style="left:180.5px;top:498px;color:#000;font-size:12px;font-weight:400;letter-spacing:-0.7px;">Total:</div>
<div class="t" style="left:10px;width:300px;text-align:right;top:498px;color:#000080;font-size:12px;font-weight:400;letter-spacing:-0.6px;">795</div>
<div class="t" style="left:339.5px;top:468px;color:#000;font-size:12px;font-weight:400;letter-spacing:-0.7px;">Average:</div>
<div class="t" style="left:168.5px;width:300px;text-align:right;top:468px;color:#000080;font-size:12px;font-weight:400;letter-spacing:-0.6px;">9.94&nbsp;%</div>
<div class="t" style="left:339.5px;top:483px;color:#000;font-size:12px;font-weight:400;letter-spacing:-0.7px;">Maximum:</div>
<div class="t" style="left:168.5px;width:300px;text-align:right;top:483px;color:#000080;font-size:12px;font-weight:400;letter-spacing:-0.6px;">12.1&nbsp;%</div>
<div class="t" style="left:339.5px;top:502px;color:#000;font-size:12px;font-weight:400;letter-spacing:-0.7px;">PO failures:</div>
<div class="t" style="left:168.5px;width:300px;text-align:right;top:502px;color:#000080;font-size:12px;font-weight:400;letter-spacing:-0.5px;">0</div>
</body></html>
